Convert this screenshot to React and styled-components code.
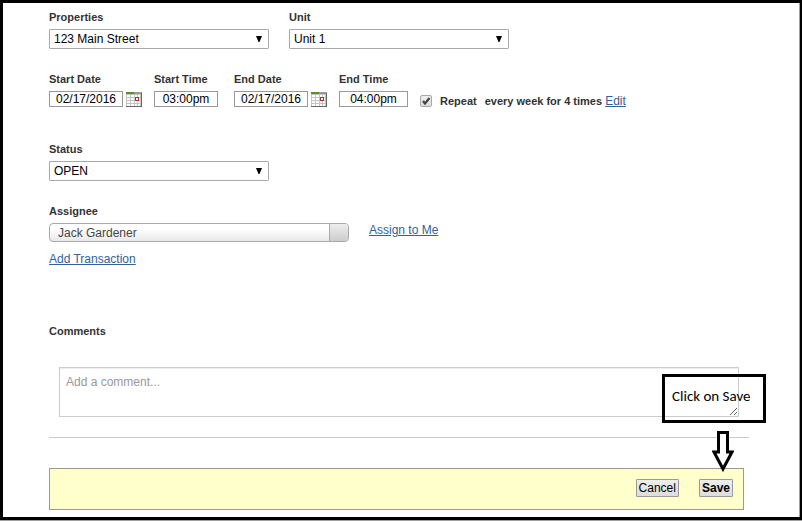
import React, { useState } from "react";
import styled, { createGlobalStyle, css } from "styled-components";

const GlobalStyle = createGlobalStyle`
  *, *::before, *::after {
    box-sizing: border-box;
  }

  body {
    margin: 0;
    background: #a0a0a0;
    color: #333;
    font-family: Arial, "Liberation Sans", sans-serif;
    font-size: 12px;
    line-height: 14px;
  }

  input, select, button, textarea {
    margin: 0;
    font: inherit;
  }
`;

const Frame = styled.main`
  min-height: calc(100vh - 1px);
  padding: 7px 51px 7px 46px;
  border: 3px solid #000;
  border-right-width: 2px;
  background: #fff;
  box-shadow: inset -1px 0 #a0a0a0;
`;

const Row = styled.div`
  display: flex;
  align-items: flex-end;
  gap: ${({ $gap }) => $gap || 20}px;
  margin-bottom: ${({ $space }) => $space || 0}px;
`;

const Field = styled.div`
  display: flex;
  flex-direction: column;
  align-items: flex-start;
`;

const label = css`
  color: #333;
  font-size: 11px;
  font-weight: bold;
  line-height: 14px;
`;

const Label = styled.label`
  ${label}
  margin-bottom: 5px;
`;

const SelectBox = styled.div`
  display: grid;
  align-items: center;
  width: 220px;

  > * {
    grid-area: 1 / 1;
  }

  svg {
    justify-self: end;
    margin-right: 7px;
    pointer-events: none;
  }
`;

const Select = styled.select`
  width: 100%;
  height: 20px;
  padding: 0 4px;
  border: 1px solid #a9a9a9;
  border-radius: 1px;
  appearance: none;
  background: #fff;
  color: #000;
`;

const DateInput = styled.input`
  width: ${({ $width }) => $width}px;
  height: 16px;
  padding: 0;
  border: 1px solid #999;
  background: #fff;
  color: #000;
  text-align: center;
`;

const DateGroup = styled.div`
  display: flex;
  gap: 3px;
`;

const IconButton = styled.button`
  display: flex;
  align-items: flex-end;
  height: 16px;
  padding: 0;
  border: 0;
  background: none;
`;

const Repeat = styled.div`
  ${label}
  display: flex;
  align-items: center;
  gap: 8px;
  margin-bottom: -1px;

  label {
    display: flex;
    align-items: center;
    gap: 8px;
  }

  a {
    font-size: 12px;
  }
`;

const CheckBox = styled.span`
  display: grid;

  > * {
    grid-area: 1 / 1;
  }

  svg {
    pointer-events: none;
  }
`;

const Check = styled.input`
  width: 12px;
  height: 12px;
  border: 1px solid #a8a8a8;
  border-radius: 2px;
  appearance: none;
  background: linear-gradient(#eee, #dcdcdc);

  &:not(:checked) + svg {
    display: none;
  }
`;

const Link = styled.a`
  color: #336199;
  font-weight: normal;
  text-decoration: underline;
`;

const Combo = styled.div`
  display: flex;
  width: 300px;
  height: 19px;
  border: 1px solid #aaa;
  border-radius: 4px;
  overflow: hidden;
  background: linear-gradient(#fff 30%, #e8e8e8);
`;

const ComboInput = styled.input`
  flex: 1;
  min-width: 0;
  padding: 0 8px;
  border: 0;
  background: none;
  color: #444;
`;

const ComboToggle = styled.button`
  width: 19px;
  padding: 0;
  border: 0;
  border-left: 1px solid #aaa;
  background: linear-gradient(#eee, #ccc);
`;

const Comments = styled.section`
  position: relative;
  margin-top: 58px;
  padding-bottom: 20px;
  border-bottom: 1px solid #ccc;
`;

const CommentBox = styled.div`
  margin-top: 29px;
  padding: 0 10px;
`;

const TextArea = styled.textarea`
  display: block;
  width: 100%;
  height: 50px;
  padding: 7px 6px;
  border: 1px solid #ccc;
  background: #fff;
  box-shadow: inset 0 1px 1px #eee;
  color: #333;

  &::placeholder {
    color: #999;
  }
`;

const Callout = styled.div`
  position: absolute;
  right: -17px;
  bottom: 14px;
  width: 104px;
  padding: 10px 0 15px 7px;
  border: 3px solid #000;
  color: #000;
  font-family: Calibri, Carlito, Lato, sans-serif;
  font-size: 15px;
  line-height: 18px;
  white-space: nowrap;
  pointer-events: none;
`;

const Footer = styled.footer`
  position: relative;
  display: flex;
  align-items: center;
  justify-content: flex-end;
  gap: 20px;
  height: 42px;
  margin: 30px 5px 0 0;
  padding: 0 10px 2px;
  border: 1px solid #999;
  background: #ffc;
`;

const Button = styled.button`
  height: 18px;
  padding: 0 2px;
  border: 1px solid #999;
  border-radius: 1px;
  background: linear-gradient(#eee, #ddd);
  color: #000;
  font-weight: ${({ $primary }) => ($primary ? "bold" : "normal")};
  line-height: 16px;
`;

const Arrow = styled.svg`
  position: absolute;
  right: 9px;
  bottom: 37px;
  pointer-events: none;
`;

const Dropdown = ({ id, title, options }) => (
  <Field>
    <Label htmlFor={id}>{title}</Label>
    <SelectBox>
      <Select id={id}>
        {options.map(option => (
          <option key={option}>{option}</option>
        ))}
      </Select>
      <svg width="6" height="6" viewBox="0 0 6 6">
        <path d="M0 0h6L3.5 6h-1z" fill="#000" />
      </svg>
    </SelectBox>
  </Field>
);

const Calendar = () => (
  <svg width="16" height="15" viewBox="0 0 16 15" shapeRendering="crispEdges">
    <path d="M0 0h16v15H0z" fill="#c4c4c4" />
    <path
      d="M1 3h3v2H1zM5 3h3v2H5zM9 3h2v2H9zM12 3h2v2h-2zM1 6h3v2H1zM5 6h3v2H5zM9 6h2v2H9zM12 6h2v2h-2zM1 9h3v2H1zM5 9h3v2H5zM9 9h2v2H9zM12 9h2v2h-2zM1 12h3v2H1zM5 12h3v2H5zM9 12h2v2H9zM12 12h2v2h-2z"
      fill="#fff"
    />
    <path d="M0 0h8v2H0z" fill="#5f8d2c" />
    <path d="M8 0h8v2H8z" fill="#999" />
    <path d="M15 1h1v14h-1zM0 14h16v1H0z" fill="#666" />
    <path d="M9.5 5.5h3v3h-3z" fill="#fff" stroke="#a33" />
  </svg>
);

const DateField = ({ id, title, value, width, calendar }) => (
  <Field>
    <Label htmlFor={id}>{title}</Label>
    <DateGroup>
      <DateInput id={id} defaultValue={value} $width={width} />
      {calendar && (
        <IconButton type="button" aria-label={`Pick ${title}`}>
          <Calendar />
        </IconButton>
      )}
    </DateGroup>
  </Field>
);

export default function App() {
  const [repeat, setRepeat] = useState(true);

  return (
    <>
      <GlobalStyle />
      <Frame>
        <Row $space={23}>
          <Dropdown
            id="property"
            title="Properties"
            options={["123 Main Street"]}
          />
          <Dropdown id="unit" title="Unit" options={["Unit 1"]} />
        </Row>

        <Row $gap={16} $space={35}>
          <Row $gap={12}>
            <DateField
              id="start-date"
              title="Start Date"
              value="02/17/2016"
              width={74}
              calendar
            />
            <DateField
              id="start-time"
              title="Start Time"
              value="03:00pm"
              width={64}
            />
          </Row>
          <Row $gap={12}>
            <DateField
              id="end-date"
              title="End Date"
              value="02/17/2016"
              width={74}
              calendar
            />
            <DateField
              id="end-time"
              title="End Time"
              value="04:00pm"
              width={69}
            />
            <Repeat>
              <label>
                <CheckBox>
                  <Check
                    type="checkbox"
                    checked={repeat}
                    onChange={e => setRepeat(e.target.checked)}
                  />
                  <svg width="12" height="12" viewBox="0 0 12 12">
                    <path
                      d="M3 6l2 2.5L9.5 3"
                      fill="none"
                      stroke="#444"
                      strokeWidth="2.2"
                    />
                  </svg>
                </CheckBox>
                Repeat
              </label>
              <span>
                every week for 4 times <Link href="#edit">Edit</Link>
              </span>
            </Repeat>
          </Row>
        </Row>

        <Row $space={23}>
          <Dropdown id="status" title="Status" options={["OPEN"]} />
        </Row>

        <Row $space={10}>
          <Field>
            <Label htmlFor="assignee">Assignee</Label>
            <Combo>
              <ComboInput id="assignee" defaultValue="Jack Gardener" />
              <ComboToggle type="button" aria-label="Show assignees" />
            </Combo>
          </Field>
          <Row $space={5}>
            <Link href="#assign">Assign to Me</Link>
          </Row>
        </Row>
        <Link href="#transaction">Add Transaction</Link>

        <Comments>
          <Label htmlFor="comment">Comments</Label>
          <CommentBox>
            <TextArea id="comment" placeholder="Add a comment..." />
          </CommentBox>
          <Callout>Click on Save</Callout>
        </Comments>

        <Footer>
          <Button type="button">Cancel</Button>
          <Button type="submit" $primary>
            Save
          </Button>
          <Arrow width="22" height="41" viewBox="0 0 22 41">
            <path
              d="M6.5 1.5h9V21H20L11 38 2 21h4.500z"
              fill="#fff"
              stroke="#000"
              strokeWidth="3"
            />
          </Arrow>
        </Footer>
      </Frame>
    </>
  );
}
